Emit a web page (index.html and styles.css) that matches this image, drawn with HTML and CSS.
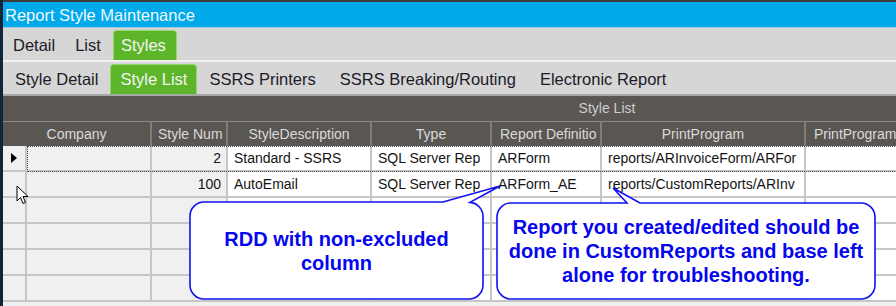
FILE: index.html
```html
<!DOCTYPE html>
<html>
	<head>
		<title>Report Style Maintenance</title>
		<link rel="stylesheet" href="styles.css">
	</head>
	<body>
		<div class="window">
			<div class="titlebar">Report Style Maintenance</div>

			<nav class="tabs tabs-top">
				<span class="tab">Detail</span>
				<span class="tab">List</span>
				<span class="tab active">Styles</span>
			</nav>

			<nav class="tabs tabs-sub">
				<span class="tab">Style Detail</span>
				<span class="tab active">Style List</span>
				<span class="tab">SSRS Printers</span>
				<span class="tab">SSRS Breaking/Routing</span>
				<span class="tab">Electronic Report</span>
			</nav>

			<div class="viewport">
				<div class="grid">
					<div class="caption">Style List</div>

					<div class="row head">
						<div class="cell wide">Company</div>
						<div class="cell">Style Num</div>
						<div class="cell">StyleDescription</div>
						<div class="cell">Type</div>
						<div class="cell left">Report Definitio</div>
						<div class="cell">PrintProgram</div>
						<div class="cell left">PrintProgram</div>
						<div class="cell"></div>
					</div>

					<div class="row current">
						<div class="cell rowhead"><span class="pointer"></span></div>
						<div class="cell shade"></div>
						<div class="cell shade num">2</div>
						<div class="cell">Standard - SSRS</div>
						<div class="cell">SQL Server Rep</div>
						<div class="cell">ARForm</div>
						<div class="cell">reports/ARInvoiceForm/ARFor</div>
						<div class="cell"></div>
						<div class="cell"></div>
					</div>

					<div class="row">
						<div class="cell rowhead"></div>
						<div class="cell shade"></div>
						<div class="cell shade num">100</div>
						<div class="cell">AutoEmail</div>
						<div class="cell">SQL Server Rep</div>
						<div class="cell">ARForm_AE</div>
						<div class="cell">reports/CustomReports/ARInv</div>
						<div class="cell"></div>
						<div class="cell"></div>
					</div>

					<div class="row empty">
						<div class="cell rowhead"></div><div class="cell shade"></div><div class="cell shade"></div>
						<div class="cell"></div><div class="cell"></div><div class="cell"></div><div class="cell"></div><div class="cell"></div><div class="cell"></div>
					</div>
					<div class="row empty">
						<div class="cell rowhead"></div><div class="cell shade"></div><div class="cell shade"></div>
						<div class="cell"></div><div class="cell"></div><div class="cell"></div><div class="cell"></div><div class="cell"></div><div class="cell"></div>
					</div>
					<div class="row empty">
						<div class="cell rowhead"></div><div class="cell shade"></div><div class="cell shade"></div>
						<div class="cell"></div><div class="cell"></div><div class="cell"></div><div class="cell"></div><div class="cell"></div><div class="cell"></div>
					</div>
					<div class="row empty">
						<div class="cell rowhead"></div><div class="cell shade"></div><div class="cell shade"></div>
						<div class="cell"></div><div class="cell"></div><div class="cell"></div><div class="cell"></div><div class="cell"></div><div class="cell"></div>
					</div>
				</div>

				<!-- mouse pointer -->
				<svg class="cursor" width="13" height="20" viewBox="0 0 13 20">
					<path d="M1,1 V16 L4.5,12.5 L7,18.5 L9.5,17.5 L7,11.5 H12 Z" fill="#fff" stroke="#000" stroke-width="1"/>
				</svg>

				<div class="callout callout-rdd">
					<svg class="bubble" width="293" height="97">
						<path d="M14,0 H253 L310,-16 L280,0.4 A14,14 0 0 1 293,14 V83 A14,14 0 0 1 279,97 H14 A14,14 0 0 1 0,83 V14 A14,14 0 0 1 14,0 Z"/>
					</svg>
					<div class="note">RDD with non-excluded<br>column</div>
				</div>

				<div class="callout callout-path">
					<svg class="bubble" width="378" height="96">
						<path d="M14,0 H130 L116,-15 L143,0 H364 A14,14 0 0 1 378,14 V82 A14,14 0 0 1 364,96 H14 A14,14 0 0 1 0,82 V14 A14,14 0 0 1 14,0 Z"/>
					</svg>
					<div class="note">Report you created/edited should be<br>done in CustomReports and base left<br>alone for troubleshooting.</div>
				</div>
			</div>
		</div>
	</body>
</html>
```

FILE: styles.css
```css
* {
	margin: 0; padding: 0;
	box-sizing: border-box;
}

html, body {
	height: 100%;
	overflow: hidden;
}

body {
	background: #0f2638;
	font-family: "Liberation Sans", Arial, sans-serif;
}

.window {
	margin-left: 3px;
	height: 100%;
	display: flex;
	flex-direction: column;
	border-top: 2px solid #3b3b3b;
	background: #d6d6d6;
}

.titlebar {
	height: 26px;
	flex: none;
	padding-left: 2px;
	background: #00a9e9;
	color: #eef8ff;
	font-size: 16.5px;
	line-height: 26px;
	border-bottom: 1px solid #9ccbe0;
}

.tabs {
	display: flex;
	align-items: flex-end;
	flex: none;
	background: #d6d6d6;
	color: #1c1a28;
	font-size: 16.5px;
}

.tabs-top {
	height: 34px;
	padding-left: 2px;
	gap: 4px;
	border-bottom: 2px solid #f2f2f2;
}

.tabs-sub {
	height: 34px;
	border-bottom: 2px solid #a8a8a8;
}

.tab {
	padding: 0 7px;
	height: 30px;
	line-height: 29px;
	border: 1px solid transparent;
	border-bottom: none;
}

.tabs-sub .tab {
	padding: 0 11px;
}

.tab.active {
	background: #5db52a;
	border-color: #96d66e;
	border-radius: 4px 4px 0 0;
	color: #f4f4f4;
	padding: 0 10px 0 7px;
}

.tabs-sub .tab.active {
	padding: 0 9px;
}

.viewport {
	flex: 1;
	position: relative;
	overflow: hidden;
	background: #f0f0f0;
}

.grid {
	width: 1208px;
	font-size: 14px;
}

.caption {
	height: 26px;
	background: #5a5652;
	border-bottom: 1px solid #8b8682;
	color: #cfcfcf;
	text-align: center;
	line-height: 25px;
}

.row {
	display: grid;
	grid-template-columns: 24px 125px 76px 144px 120px 110px 204px 200px 205px;
	height: 26px;
	border-bottom: 2px solid #c6c6c6;
	position: relative;
}

.cell {
	border-right: 2px solid #c6c6c6;
	background: #fff;
	color: #141414;
	padding: 0 6px;
	line-height: 24px;
	white-space: nowrap;
	overflow: hidden;
}

.cell.shade, .cell.rowhead {
	background: #f0f0f0;
}

.cell.num {
	text-align: right;
	padding-right: 5px;
}

.cell.rowhead {
	display: flex;
	align-items: center;
	justify-content: center;
}

.pointer {
	width: 0; height: 0;
	border-left: 6px solid #000;
	border-top: 5px solid transparent;
	border-bottom: 5px solid transparent;
}

.row.head {
	height: 24px;
	border-bottom: none;
	background: #5a5652;
}

.row.head .cell {
	background: #5a5652;
	border-right-color: #807c78;
	color: #dadada;
	text-align: center;
}

.row.head .cell.left {
	text-align: left;
	padding-left: 8px;
}

.row.head .cell.wide {
	grid-column: span 2;
}

.row.current::after {
	content: "";
	position: absolute;
	left: 24px; right: 0;
	top: 0; bottom: -2px;
	border: 1px dotted #4a4a4a;
	border-right: none;
}

.cursor {
	position: absolute;
	left: 13px;
	top: 89px;
}

.callout {
	position: absolute;
}

.callout-rdd {
	left: 187px;
	top: 106px;
	width: 293px;
	height: 97px;
}

.callout-path {
	left: 494px;
	top: 107px;
	width: 378px;
	height: 96px;
}

.bubble {
	position: absolute;
	left: 0; top: 0;
	overflow: visible;
}

.bubble path {
	fill: #fff;
	stroke: #1010f0;
	stroke-width: 1.6;
}

.note {
	position: absolute;
	inset: 0;
	display: flex;
	align-items: center;
	justify-content: center;
	text-align: center;
	color: #0505ee;
	font-weight: 700;
	font-size: 20px;
	line-height: 24px;
}
```
